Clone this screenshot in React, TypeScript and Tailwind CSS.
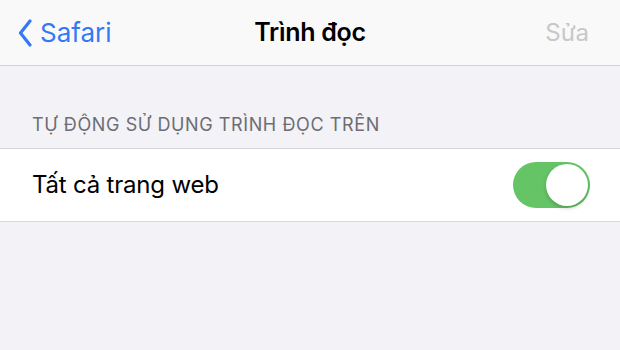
import React from "react";

export default function App() {
  return (
    <div
      className="w-[620px] h-[350px] bg-[#f2f2f7] overflow-hidden"
      style={{ fontFamily: "Inter, 'Noto Sans', sans-serif" }}
    >
      <div className="h-[66px] bg-[#f9f9f9] border-b border-[#d1d1d6] flex items-center relative">
        <div className="flex items-center pl-[18px] gap-[8px] text-[#3478f6]">
          <svg width="14" height="28" viewBox="0 0 14 28" fill="none">
            <path d="M12 2 L2.5 14 L12 26" stroke="#3478f6" strokeWidth="3.2" strokeLinecap="round" strokeLinejoin="round" />
          </svg>
          <span className="text-[26px] tracking-[0px]">Safari</span>
        </div>
        <div className="absolute inset-x-0 top-0 h-full flex items-center justify-center pointer-events-none">
          <span className="text-[25px] font-semibold text-black tracking-[-0.3px]">Trình đọc</span>
        </div>
        <span className="ml-auto pr-[31px] text-[24px] text-[#c7c7cc]">Sửa</span>
      </div>
      <div className="pt-[48px] pb-[12px] pl-[32px] text-[18px] text-[#6d6d72] tracking-[0.6px] leading-[22px]">
        TỰ ĐỘNG SỬ DỤNG TRÌNH ĐỌC TRÊN
      </div>
      <div className="h-[74px] bg-white border-y border-[#d8d8dc] flex items-center pl-[32px] pr-[30px]">
        <span className="text-[24px] text-black tracking-[-0.2px]">Tất cả trang web</span>
        <div className="ml-auto w-[77px] h-[46px] rounded-full bg-[#65c466] flex items-center justify-end pr-[2px]">
          <div className="w-[42px] h-[42px] rounded-full bg-white shadow-[0_2px_4px_rgba(0,0,0,0.2)]" />
        </div>
      </div>
    </div>
  );
}
